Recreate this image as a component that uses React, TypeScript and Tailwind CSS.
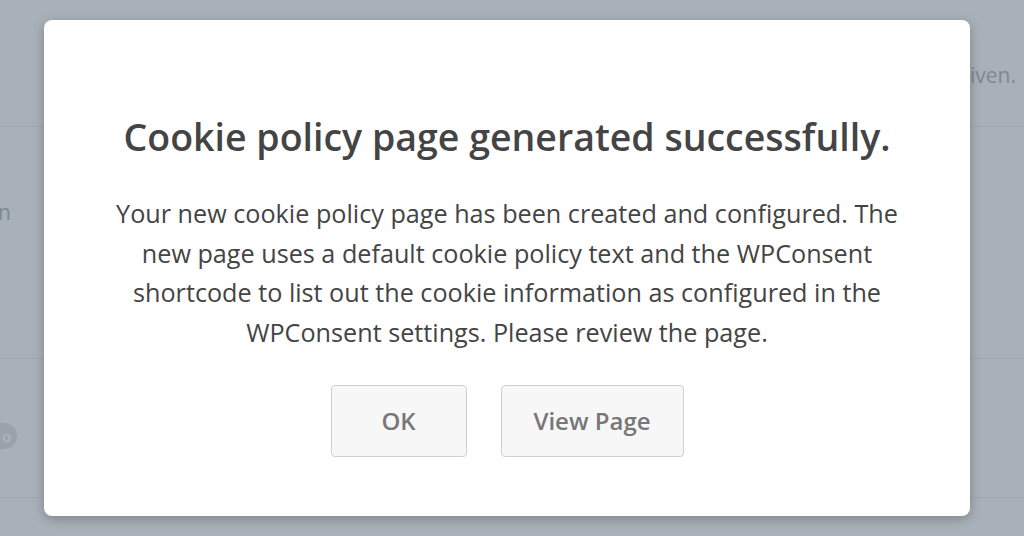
import React from "react";

export default function App() {
  return (
    <div className="relative w-[1024px] h-[536px] overflow-hidden bg-[#a8b1b9] font-['Open_Sans',sans-serif]">
      {/* background page (dimmed) */}
      <div className="flex flex-col">
        <div className="h-[127px] border-b border-[#9ea7af] flex items-start justify-end pr-[8px] pt-[60px]">
          <span className="text-[21px] leading-[30px] text-[#7f8890]">given.</span>
        </div>
        <div className="h-[232px] border-b border-[#9ea7af] flex items-start pt-[70px]">
          <span className="text-[21px] leading-[30px] text-[#7f8890] -ml-[2px]">n</span>
        </div>
        <div className="h-[139px] border-b border-[#9ea7af] flex items-end pb-[48px]">
          <span className="w-[58px] h-[26px] -ml-[41px] rounded-full bg-[#9aa3ab] flex items-center justify-end pr-[6px] text-[14px] text-[#b3bbc2]">o</span>
        </div>
      </div>

      {/* modal */}
      <div className="absolute left-[44px] top-[20px] w-[926px] h-[496px] bg-white rounded-[8px] shadow-[0_3px_12px_rgba(0,0,0,0.25)] flex flex-col items-center pt-[91px]">
        <h2 className="text-[37.5px] leading-[52px] font-semibold text-[#444444]">
          Cookie policy page generated successfully.
        </h2>
        <p className="mt-[31px] w-[880px] text-center text-[25.2px] leading-[39.5px] text-[#444444]">
          Your new cookie policy page has been created and configured. The
          <br />
          new page uses a default cookie policy text and the WPConsent
          <br />
          shortcode to list out the cookie information as configured in the
          <br />
          WPConsent settings. Please review the page.
        </p>
        <div className="mt-[33px] flex gap-[34px]">
          <button className="w-[136px] h-[72px] rounded-[4px] border border-[#cfcfcf] bg-[#f7f7f7] text-[24px] text-[#777777] font-semibold">
            OK
          </button>
          <button className="w-[183px] h-[72px] rounded-[4px] border border-[#cfcfcf] bg-[#f7f7f7] text-[24px] text-[#777777] font-semibold">
            View Page
          </button>
        </div>
      </div>
    </div>
  );
}
